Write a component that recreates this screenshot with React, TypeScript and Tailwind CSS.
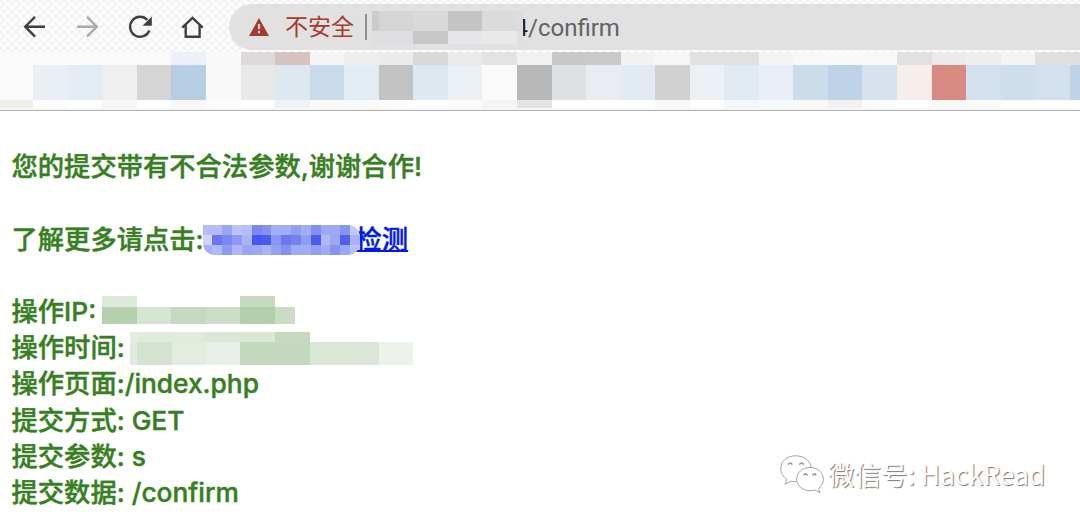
import React from "react";

const ROW_TOP = ["#fafafa","#fafafa","#fafafa","#fafafa","#fafafa","#edf1f7","#f9f9f9","#dedad9","#d6c2c0","#f5f5f5","#eeeeee","#ebebeb","#d9d9d9","#eaeaea","#e3e3e3","#f1f1f1","#c8c8ca","#c9c9c9","#f2f2f2","#f6f6f6","#e1e1e1","#e1e1e1","#f4f4f4","#f7f8f8","#f7faf9","#f7f8f8","#e1e1e1","#ebebeb","#eeeeee","#f4f4f4","#e0e0e0","#dfdfdf"];
const ROW_MID = ["#fafafa","#e9eff4","#e3ebf3","#efefef","#d5d5d5","#b5cee4","#f8f8f8","#e8e8e8","#dde8f1","#c9daea","#e3ebf3","#c2c2c2","#dde8f1","#ebf0f4","#fafafa","#b8b8b8","#dde1e4","#e9edf2","#e2eaf2","#d1d1d1","#eaf0f4","#e2eaf1","#eaeff7","#cbddeb","#bfd3e8","#d7e2ee","#f7eeec","#d98a82","#d3e0ed","#cfdeed","#d3e0ed","#bfd3e8"];
const ROW_LOW = ["#eeefe9","#fcfcfc","#ffffff","#f6f6f6","#ffffff","#f8f8f8","#fcfcfc","#ffffff","#eff1f4","#f9f9f9","#f9f9f9","#fdfdfd","#ffffff","#fafafa","#f5f5f5","#e4e4e4","#ffffff","#ffffff","#ffffff","#f8f8f8","#ffffff","#f5f7f6","#f7f8f8","#f8f8f8","#f0f1f3","#fbfbfb","#ffffff","#f9f9f9","#f9f9f9","#ffffff","#ffffff","#ffffff"];

const LINK_ROWS = [
  ["#b3bcf5","#b5bbf6","#9ba5f4","#bdc4f8","#b6bef7","#7a87ef","#8491ef","#a4aef6","#a3adf5","#929ef1","#a3adf5","#828ef0","#9ea8f4","#9ea9f4","#8793f0","#c3caf8"],
  ["#cfd3fa","#6877ef","#7b88f0","#8e9af2","#aab4f6","#4557ec","#4c5dec","#8a96f2","#6a79ee","#7482ee","#919df2","#4a5cec","#b0b9f6","#9da8f4","#4f60ec","#a9b3f5"],
  ["#a5b0f4","#b1baf6","#8e9af2","#adb7f6","#9aa5f4","#9da8f4","#a9b3f5","#939ff3","#8491f1","#9fabf4","#a1acf4","#929ef2","#a0abf4","#8793f1","#9ba6f4","#b8c0f6"],
];

function Strip({ colors, height }: { colors: string[]; height: string }) {
  return (
    <div className={`flex w-[1105px] ${height}`}>
      {colors.map((c, i) => (
        <div key={i} className={i === 0 ? "w-[33.3px] shrink-0" : "w-[34.56px] shrink-0"} style={{ backgroundColor: c }} />
      ))}
    </div>
  );
}

function Cells({ cells }: { cells: [number, string][] }) {
  return (
    <div className="flex h-full">
      {cells.map(([w, c], i) => (
        <div key={i} className="h-full shrink-0" style={{ width: w, backgroundColor: c }} />
      ))}
    </div>
  );
}

function Weave() {
  return (
    <svg className="absolute inset-0 h-full w-full" aria-hidden="true">
      <defs>
        <pattern id="weave" width="16" height="16" patternUnits="userSpaceOnUse">
          <rect width="16" height="16" fill="#fefefe" />
          <path d="M0 0l16 16M8 0l8 8M0 8l8 8M0 8l8-8M4 12l8-8M8 16l8-8M0 16l3-3M13 3l3-3" stroke="#efefef" strokeWidth="1.4" strokeDasharray="7 2" />
        </pattern>
      </defs>
      <rect width="100%" height="100%" fill="url(#weave)" />
    </svg>
  );
}

function Toolbar() {
  return (
    <div className="relative flex h-[52px] items-start">
      <Weave />
      <svg className="relative h-[52px] w-[229px] shrink-0" viewBox="0 0 229 52" fill="none" stroke="#404040" strokeWidth="2.4">
        <path d="M45 26.7H25M35 16.8l-9.8 9.9 9.8 9.9" />
        <path d="M77 26.7h20M87 16.8l9.8 9.9-9.8 9.9" stroke="#ababab" />
        <path d="M149.4 30.5A10 10 0 1 1 147.3 19.8" />
        <path d="M151.8 16.5v9.2h-9.2z" fill="#404040" stroke="none" />
        <path d="M182.3 27.6L192.5 18l10.2 9.6M185.7 25v11.7h13.9V25" />
      </svg>
      <div className="relative mt-1 flex h-[46px] flex-1 items-center rounded-l-full bg-[#e1e1e1] pl-5">
        <svg className="h-[18px] w-5" viewBox="0 0 20 18">
          <path d="M10 0L20 18H0z" fill="#a63a2d" />
          <path d="M10 6v5M10 12.7v2.5" stroke="#e9dcda" strokeWidth="2.2" />
        </svg>
        <span className="relative top-px ml-4 w-[70px] whitespace-nowrap text-[23px] text-[#a63a2d]">不安全</span>
        <div className="ml-[10px] h-[26px] w-[1.5px] bg-[#909090]" />
        <div className="relative z-10 ml-[5px] h-[33px] w-[151px]">
          <div className="h-5"><Cells cells={[[7, "#cbcbcb"], [34.5, "#d5d5d5"], [34.5, "#d9d9d9"], [34.5, "#c5c5c5"], [34.5, "#dbdbdb"], [6, "#dddddd"]]} /></div>
          <div className="h-[13px]"><Cells cells={[[7, "#dedede"], [34.5, "#dcdee1"], [34.5, "#c7c7c7"], [34.5, "#e5e6e9"], [34.5, "#e9e9e9"], [6, "#dfdfdf"]]} /></div>
        </div>
        <span className="-ml-[8px] pt-px text-[24px] text-[#202124]">4</span>
        <span className="pt-px text-[24px] text-[#5f6368]">/confirm</span>
      </div>
    </div>
  );
}

function Line({ children }: { children?: React.ReactNode }) {
  return <div className="flex h-[36.2px] items-center whitespace-pre">{children}</div>;
}

function Watermark() {
  return (
    <div className="absolute left-[780px] top-[454px] flex items-center text-white">
      <svg className="mt-px h-[39px] w-[44px]" viewBox="0 0 44 39" fill="#fff" stroke="#999" strokeWidth=".9">
        <path d="M15.5.8C7 .8.7 6.4.7 13.7c0 4.5 2.4 8 6 10.5L5 29.2l6-3q8 2 15-1.6 6-4 5-13C30 5 23 .8 15.5.8z" />
        <path d="M30 12.5c-7.5 0-13.3 5-13.3 11.5S22.5 35.7 30 35.7q2.5 0 5-.7l5 2.7-1.3-4.5c3-2.3 4.6-5.2 4.6-9.2 0-6.5-5.8-11.5-13.3-11.5z" />
        <path d="M8.4 9.8a1.8 1.8 0 0 1 3.6 0M19.7 9.8a1.8 1.8 0 0 1 3.6 0M24 20.5a1.6 1.6 0 0 1 3.2 0M32.8 20.5a1.6 1.6 0 0 1 3.2 0" stroke="#777" strokeWidth="1.2" />
      </svg>
      <span className="ml-[4px] whitespace-pre font-['Noto_Sans_CJK_SC',sans-serif] text-[26.5px] leading-[40px] [text-shadow:1px_1px_1px_#777]">微信号: HackRead</span>
    </div>
  );
}

export default function App() {
  return (
    <div className="relative h-[523px] w-[1080px] overflow-hidden bg-white font-['Roboto','Noto_Sans_CJK_SC',sans-serif]">
      <Toolbar />
      <div className="overflow-hidden">
        <Strip colors={ROW_TOP} height="h-[13px]" />
        <Strip colors={ROW_MID} height="h-[34.6px]" />
        <Strip colors={ROW_LOW} height="h-[8.4px]" />
      </div>
      <div className="h-[2px] bg-[#f7f7f7]" />
      <div className="h-px bg-[#b1b1b1]" />
      <main className="pl-[11.5px] pt-[38px] font-['Inter','Noto_Sans_CJK_SC',sans-serif] text-[26.3px] font-medium text-[#377f22] [-webkit-text-stroke:0.45px]">
        <Line>您的提交带有不合法参数,谢谢合作!</Line>
        <Line />
        <Line>
          <span className="-mr-[1px]">了解更多请点击:</span>
          <div className="relative z-10 mt-[2px] h-[30px] w-[157px] overflow-hidden rounded-bl-xl rounded-r-xl">
            {LINK_ROWS.map((r, i) => <div key={i} className="h-[10px]"><Cells cells={r.map((c) => [9.84, c] as [number, string])} /></div>)}
          </div>
          <a className="-ml-[4px] text-[#0019e8] underline decoration-2">检测</a>
        </Line>
        <Line />
        <Line>
          <span className="w-[90.5px]">操作IP: </span>
          <div className="-mt-[4px] h-[28px]">
            <div className="h-[11px]"><Cells cells={[[34.7, "#dde9db"], [103.8, "#ffffff"], [34.6, "#c5d9bf"]]} /></div>
            <div className="h-[17px]"><Cells cells={[[34.7, "#b5cfaf"], [34.6, "#d6e5d2"], [34.6, "#c4d9be"], [34.6, "#cbddc4"], [34.6, "#b3ceab"], [20, "#cadcc4"]]} /></div>
          </div>
        </Line>
        <Line>
          <span className="w-[118.5px]">操作时间: </span>
          <div className="h-[33px]">
            <div className="h-[10px]"><Cells cells={[[7, "#e3ede1"], [69, "#e0ebde"], [69, "#dbe7d7"], [34.6, "#c5d9be"]]} /></div>
            <div className="h-[23px]"><Cells cells={[[7, "#e1ebde"], [34.6, "#d4e3cf"], [34.4, "#e2ecdf"], [34.5, "#e8efe6"], [69.1, "#c4d8bd"], [34.5, "#dae7d6"], [34.5, "#dbe7d6"], [34.5, "#edf3eb"]]} /></div>
          </div>
        </Line>
        <Line>操作页面:/index.php</Line>
        <Line>提交方式: GET</Line>
        <Line>提交参数: s</Line>
        <Line>提交数据: /confirm</Line>
      </main>
      <Watermark />
    </div>
  );
}
